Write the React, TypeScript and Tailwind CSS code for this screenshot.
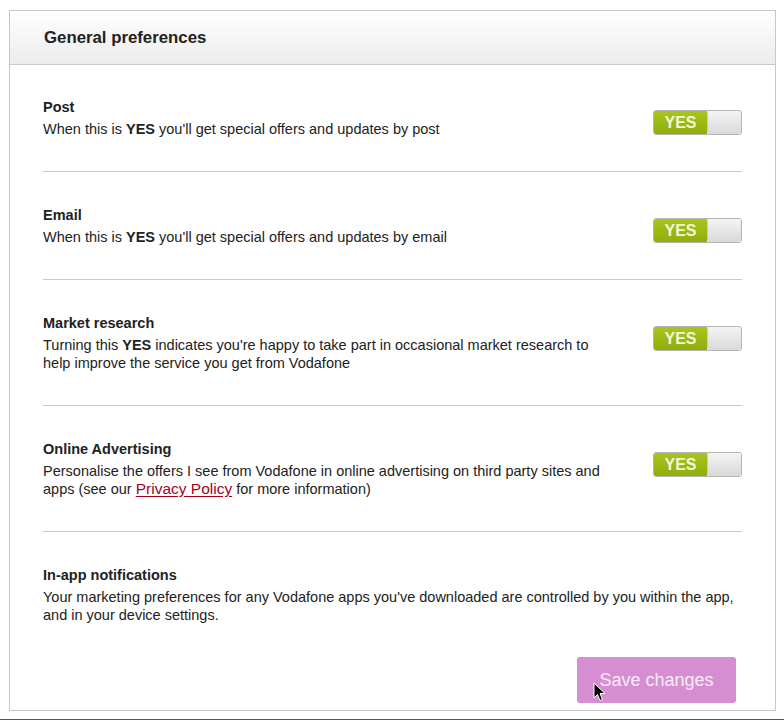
import React from "react";

type Pref = { title: string; body: React.ReactNode; toggle: boolean };

const prefs: Pref[] = [
  {
    title: "Post",
    body: (
      <>
        When this is <b>YES</b> you'll get special offers and updates by post
      </>
    ),
    toggle: true,
  },
  {
    title: "Email",
    body: (
      <>
        When this is <b>YES</b> you'll get special offers and updates by email
      </>
    ),
    toggle: true,
  },
  {
    title: "Market research",
    body: (
      <>
        Turning this <b>YES</b> indicates you're happy to take part in occasional market research to
        help improve the service you get from Vodafone
      </>
    ),
    toggle: true,
  },
  {
    title: "Online Advertising",
    body: (
      <>
        Personalise the offers I see from Vodafone in online advertising on third party sites and
        apps (see our{" "}
        <a href="#" className="text-[15.5px] text-[#a8001c] underline underline-offset-2">
          Privacy Policy
        </a>{" "}
        for more information)
      </>
    ),
    toggle: true,
  },
  {
    title: "In-app notifications",
    body: (
      <>
        Your marketing preferences for any Vodafone apps you've downloaded are controlled by you
        within the app, and in your device settings.
      </>
    ),
    toggle: false,
  },
];

const YesToggle = () => (
  <div className="mt-3 flex h-[25px] w-[89px] shrink-0 overflow-hidden rounded-[3px] border border-[#b5b5b5]">
    <div className="flex w-[53px] items-center justify-center bg-gradient-to-b from-[#a9c51c] to-[#8fae0c] text-[16px] font-bold text-[#f2f7d6]">
      YES
    </div>
    <div className="grow rounded-[3px] border-l border-[#c9c9c9] bg-gradient-to-b from-[#f4f4f4] to-[#d9d9d9]" />
  </div>
);

const PrefRow = ({ pref, first, last }: { pref: Pref; first: boolean; last: boolean }) => (
  <div
    className={
      "flex justify-between pb-[33px] " +
      (first ? "pt-[33px] " : "pt-[34px] ") +
      (last ? "" : "border-b border-[#c8c8c8]")
    }
  >
    <div className={pref.toggle ? "w-[567px]" : "w-full"}>
      <p className="mb-[4px] text-[14.5px] leading-[18px] font-bold text-[#222]">{pref.title}</p>
      <p className="text-[14.5px] leading-[18px] text-[#222]">{pref.body}</p>
    </div>
    {pref.toggle && <YesToggle />}
  </div>
);

export default function App() {
  return (
    <div
      className="relative h-[720px] w-[784px] border-b border-[#555] bg-white pt-[10px] pl-[9px]"
      style={{ fontFamily: "'Liberation Sans', Arial, sans-serif" }}
    >
      <div className="h-[701px] w-[767px] border border-[#c8c8c8]">
        <div className="flex h-[54px] items-center border-b border-[#c8c8c8] bg-gradient-to-b from-white to-[#ececec] px-[34px]">
          <h2 className="text-[16.8px] font-bold text-[#222]">General preferences</h2>
        </div>
        <div className="px-[33px]">
          {prefs.map((p, i) => (
            <PrefRow key={p.title} pref={p} first={i === 0} last={i === prefs.length - 1} />
          ))}
          <div className="flex justify-end pr-[6px]">
            <button className="h-[46px] w-[159px] rounded-[3px] bg-[#d58fd0] text-[18px] text-[#fbe9fa]">
              Save changes
            </button>
          </div>
        </div>
      </div>
      <svg
        className="absolute left-[593px] top-[682px]"
        width="13"
        height="20"
        viewBox="0 0 13 20"
      >
        <path d="M1 1 L1 16 L4.5 12.5 L7 18.5 L9.5 17.5 L7 11.5 L12 11.5 Z" fill="#000" stroke="#fff" strokeWidth="1" />
      </svg>
    </div>
  );
}
